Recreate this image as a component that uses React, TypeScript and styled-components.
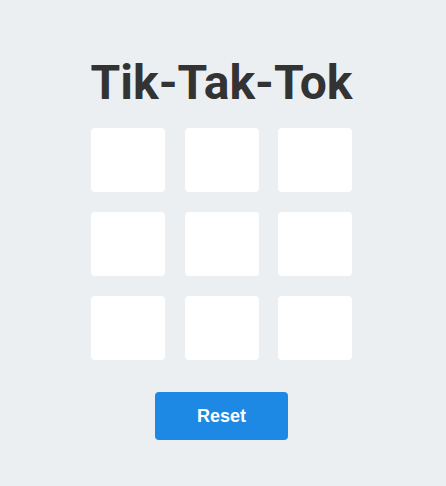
import React, { useState } from "react";
import styled, { createGlobalStyle } from "styled-components";

const Global = createGlobalStyle`
  html, body { margin: 0; padding: 0; background: #eceff1; }
  body { font-family: Roboto, "Liberation Sans", sans-serif; }
`;

const Page = styled.div`
  display: flex;
  flex-direction: column;
  align-items: center;
  padding: 59px 3px 0 0;
`;

const Title = styled.h1`
  margin: 0 0 21px;
  font-family: Roboto, sans-serif;
  font-weight: 700;
  font-size: 48px;
  line-height: 48px;
  color: #333333;
`;

const Board = styled.div`
  display: grid;
  grid-template-columns: repeat(3, 74px);
  grid-auto-rows: 64px;
  column-gap: 19.5px;
  row-gap: 20px;
`;

const Cell = styled.button`
  border: none;
  padding: 0;
  background: #ffffff;
  border-radius: 4px;
  font-family: Roboto, sans-serif;
  font-size: 36px;
  font-weight: 700;
  color: #333333;
  cursor: pointer;
`;

const ResetButton = styled.button`
  margin-top: 32px;
  width: 133px;
  height: 48px;
  border: none;
  border-radius: 4px;
  background: #1e88e5;
  color: #ffffff;
  font-family: "Liberation Sans", Arial, sans-serif;
  font-weight: 700;
  font-size: 18px;
  cursor: pointer;
`;

export default function App() {
  const [cells, setCells] = useState<string[]>(Array(9).fill(""));
  const [turn, setTurn] = useState<"X" | "O">("X");

  const play = (i: number) => {
    if (cells[i]) return;
    const next = cells.slice();
    next[i] = turn;
    setCells(next);
    setTurn(turn === "X" ? "O" : "X");
  };

  return (
    <>
      <Global />
      <Page>
        <Title>Tik-Tak-Tok</Title>
        <Board>
          {cells.map((c, i) => (
            <Cell key={i} onClick={() => play(i)}>
              {c}
            </Cell>
          ))}
        </Board>
        <ResetButton
          onClick={() => {
            setCells(Array(9).fill(""));
            setTurn("X");
          }}
        >
          Reset
        </ResetButton>
      </Page>
    </>
  );
}
